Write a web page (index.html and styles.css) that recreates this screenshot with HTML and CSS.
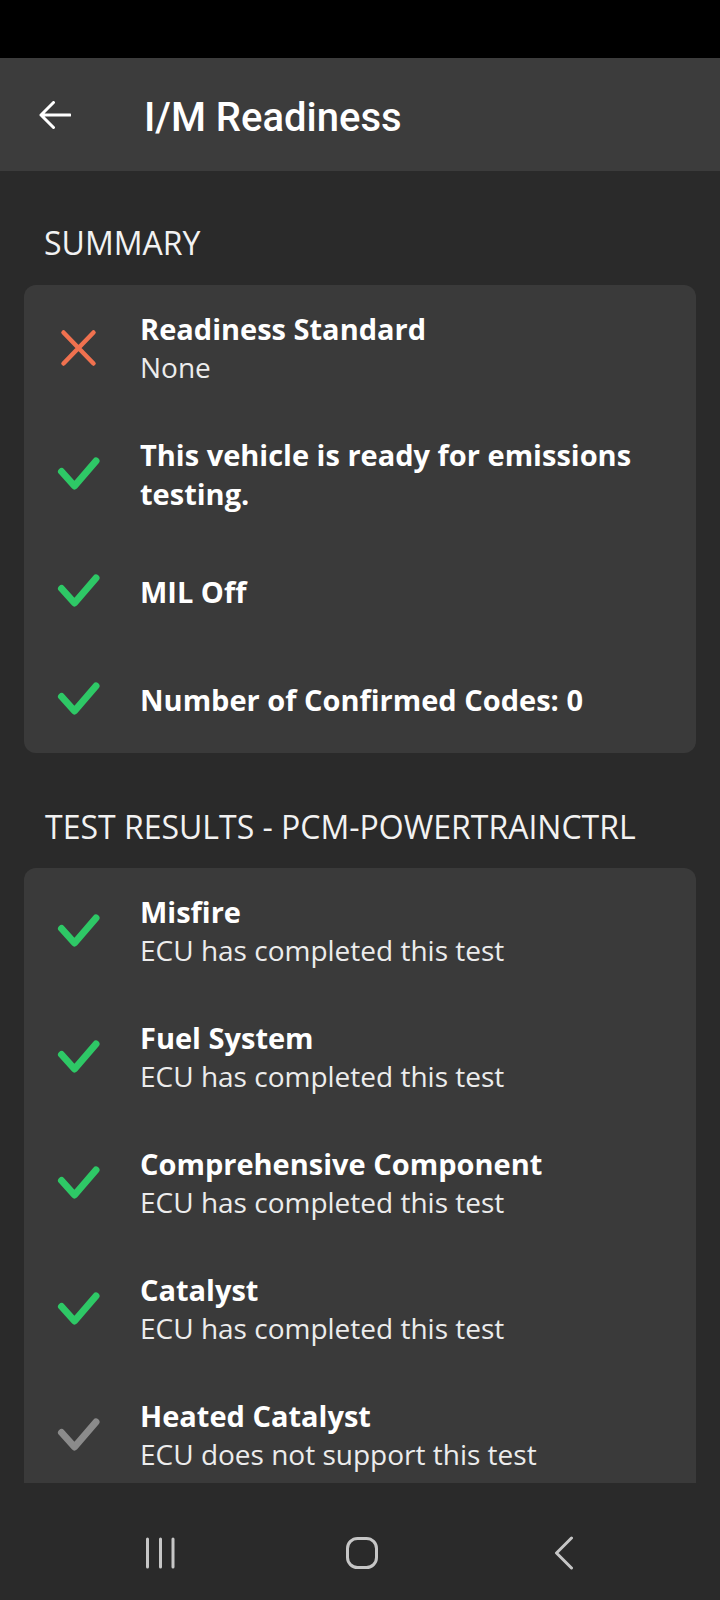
FILE: index.html
```html
<!DOCTYPE html>
<html lang="en">
<head>
<meta charset="utf-8">
<title>I/M Readiness</title>
<link rel="stylesheet" href="styles.css">
</head>
<body>
<div class="screen">
  <div class="statusbar"></div>
  <header class="appbar">
    <svg class="back" width="32" height="28" viewBox="0 0 32 28" aria-hidden="true">
      <path d="M2 14 H31 M14.5 1.5 L2 14 L14.5 26.5" fill="none" stroke="#ffffff" stroke-width="3" stroke-linecap="round" stroke-linejoin="round"/>
    </svg>
    <h1 class="title">I/M Readiness</h1>
  </header>

  <main class="content">
    <h2 class="section-label">SUMMARY</h2>
    <section class="card">
      <div class="row">
        <svg class="icon" viewBox="0 0 48 48" aria-hidden="true"><path class="x" d="M9.5 8.5 L39.5 39.5 M39.5 8.5 L9.5 39.5"/></svg>
        <div class="text">
          <div class="row-title">Readiness Standard</div>
          <div class="row-sub">None</div>
        </div>
      </div>
      <div class="row">
        <svg class="icon" viewBox="0 0 48 48" aria-hidden="true"><path class="ok" d="M7.5 21.5 L20.5 36 L42 11"/></svg>
        <div class="text">
          <div class="row-title">This vehicle is ready for emissions testing.</div>
        </div>
      </div>
      <div class="row">
        <svg class="icon" viewBox="0 0 48 48" aria-hidden="true"><path class="ok" d="M7.5 21.5 L20.5 36 L42 11"/></svg>
        <div class="text">
          <div class="row-title">MIL Off</div>
        </div>
      </div>
      <div class="row">
        <svg class="icon" viewBox="0 0 48 48" aria-hidden="true"><path class="ok" d="M7.5 21.5 L20.5 36 L42 11"/></svg>
        <div class="text">
          <div class="row-title">Number of Confirmed Codes: 0</div>
        </div>
      </div>
    </section>

    <h2 class="section-label second">TEST RESULTS - PCM-POWERTRAINCTRL</h2>
    <section class="card open">
      <div class="row test">
        <svg class="icon" viewBox="0 0 48 48" aria-hidden="true"><path class="ok" d="M7.5 21.5 L20.5 36 L42 11"/></svg>
        <div class="text">
          <div class="row-title">Misfire</div>
          <div class="row-sub">ECU has completed this test</div>
        </div>
      </div>
      <div class="row test">
        <svg class="icon" viewBox="0 0 48 48" aria-hidden="true"><path class="ok" d="M7.5 21.5 L20.5 36 L42 11"/></svg>
        <div class="text">
          <div class="row-title">Fuel System</div>
          <div class="row-sub">ECU has completed this test</div>
        </div>
      </div>
      <div class="row test">
        <svg class="icon" viewBox="0 0 48 48" aria-hidden="true"><path class="ok" d="M7.5 21.5 L20.5 36 L42 11"/></svg>
        <div class="text">
          <div class="row-title">Comprehensive Component</div>
          <div class="row-sub">ECU has completed this test</div>
        </div>
      </div>
      <div class="row test">
        <svg class="icon" viewBox="0 0 48 48" aria-hidden="true"><path class="ok" d="M7.5 21.5 L20.5 36 L42 11"/></svg>
        <div class="text">
          <div class="row-title">Catalyst</div>
          <div class="row-sub">ECU has completed this test</div>
        </div>
      </div>
      <div class="row test">
        <svg class="icon" viewBox="0 0 48 48" aria-hidden="true"><path class="na" d="M7.5 21.5 L20.5 36 L42 11"/></svg>
        <div class="text">
          <div class="row-title">Heated Catalyst</div>
          <div class="row-sub">ECU does not support this test</div>
        </div>
      </div>
    </section>
  </main>

  <nav class="navbar">
    <div class="nav-item">
      <svg width="32" height="32" viewBox="0 0 32 32" aria-hidden="true"><path d="M3.5 2 V30 M16.5 2 V30 M29 2 V30" fill="none" stroke="#c6c6c6" stroke-width="3" stroke-linecap="round"/></svg>
    </div>
    <div class="nav-item">
      <svg width="34" height="34" viewBox="0 0 34 34" aria-hidden="true"><rect x="2.5" y="2.5" width="29" height="29" rx="10" fill="none" stroke="#c6c6c6" stroke-width="3"/></svg>
    </div>
    <div class="nav-item">
      <svg width="20" height="34" viewBox="0 0 20 34" aria-hidden="true"><path d="M17.5 2 L2.5 17 L17.5 32" fill="none" stroke="#c6c6c6" stroke-width="3" stroke-linecap="round" stroke-linejoin="round"/></svg>
    </div>
  </nav>
</div>
</body>
</html>
```

FILE: styles.css
```css
* { box-sizing: border-box; }

html, body {
  margin: 0;
  padding: 0;
  background: #2a2a2a;
}

body {
  font-family: "Open Sans", "Noto Sans", "DejaVu Sans", sans-serif;
  color: #ffffff;
}

.screen {
  width: 720px;
  height: 1600px;
  display: flex;
  flex-direction: column;
  overflow: hidden;
  background: #2a2a2a;
}

.statusbar {
  height: 58px;
  flex: none;
  background: #000000;
}

.appbar {
  height: 113px;
  flex: none;
  background: #3c3c3c;
  display: flex;
  align-items: center;
  padding-left: 39px;
  gap: 73px;
}

.back { flex: none; display: block; }

.title {
  margin: 0;
  padding-top: 5px;
  font-family: Roboto, "Liberation Sans", sans-serif;
  font-weight: 500;
  font-size: 40px;
  line-height: 47px;
  color: #ffffff;
}

.content {
  flex: 1 1 auto;
  height: 1312px;
  overflow: hidden;
  padding: 0 24px;
}

.section-label {
  margin: 52px 0 22px 20px;
  font-weight: 400;
  font-size: 32px;
  line-height: 40px;
  color: #f2f2f2;
  letter-spacing: 0;
}

.section-label.second {
  margin-top: 54px;
  margin-bottom: 21px;
  margin-left: 21px;
}

.card {
  background: #3a3a3a;
  border-radius: 12px;
  display: flex;
  flex-direction: column;
}

.card.open {
  border-bottom-left-radius: 0;
  border-bottom-right-radius: 0;
}

.row {
  display: flex;
  align-items: center;
  gap: 38px;
  padding: 24px 24px 24px 30px;
  min-height: 108px;
}

.row.test {
  padding-top: 24px;
  padding-bottom: 24px;
}

.icon {
  width: 48px;
  height: 48px;
  flex: none;
  display: block;
}

.icon path {
  fill: none;
  stroke-linecap: round;
  stroke-linejoin: round;
}

.icon .ok { stroke: #2ec866; stroke-width: 7; }
.icon .na { stroke: #8b8b8b; stroke-width: 7; }
.icon .x  { stroke: #f0714f; stroke-width: 4.5; }

.text {
  flex: 1 1 auto;
  min-width: 0;
}

.row-title {
  font-weight: 700;
  font-size: 29px;
  line-height: 39px;
  color: #ffffff;
}

.row-sub {
  font-weight: 400;
  font-size: 28px;
  line-height: 39px;
  color: #ececec;
}

.navbar {
  height: 117px;
  flex: none;
  background: #2a2a2a;
  display: flex;
  justify-content: center;
  align-items: center;
  gap: 142px;
  padding: 23px 0 0 4px;
}

.nav-item {
  width: 60px;
  display: flex;
  justify-content: center;
  align-items: center;
}

.nav-item svg { display: block; }
```
